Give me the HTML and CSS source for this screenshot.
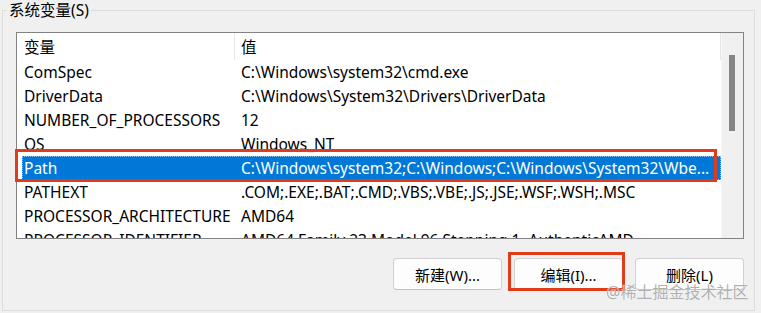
FILE: index.html
```html
<!DOCTYPE html>
<html lang="zh-CN">
<head>
    <meta charset="UTF-8">
    <title>系统变量</title>
    <link rel="stylesheet" href="styles.css">
</head>
<body>
    <fieldset class="group">
        <legend>系统变量(S)</legend>

        <div class="listbox">
            <div class="list">
                <div class="row head">
                    <span class="name">变量</span>
                    <span class="value">值</span>
                </div>
                <div class="row"><span class="name">ComSpec</span><span class="value">C:\Windows\system32\cmd.exe</span></div>
                <div class="row"><span class="name">DriverData</span><span class="value">C:\Windows\System32\Drivers\DriverData</span></div>
                <div class="row"><span class="name">NUMBER_OF_PROCESSORS</span><span class="value">12</span></div>
                <div class="row"><span class="name">OS</span><span class="value">Windows_NT</span></div>
                <div class="row selected"><span class="name">Path</span><span class="value">C:\Windows\system32;C:\Windows;C:\Windows\System32\Wbe...</span></div>
                <div class="row"><span class="name">PATHEXT</span><span class="value">.COM;.EXE;.BAT;.CMD;.VBS;.VBE;.JS;.JSE;.WSF;.WSH;.MSC</span></div>
                <div class="row"><span class="name">PROCESSOR_ARCHITECTURE</span><span class="value">AMD64</span></div>
                <div class="row"><span class="name">PROCESSOR_IDENTIFIER</span><span class="value">AMD64 Family 23 Model 96 Stepping 1, AuthenticAMD</span></div>
            </div>
            <div class="scrollbar"><div class="thumb"></div></div>
            <div class="mark mark-row"></div>
        </div>

        <div class="buttons">
            <button>新建(W)...</button>
            <div class="btn-wrap">
                <button>编辑(I)...</button>
                <div class="mark mark-btn"></div>
            </div>
            <button>删除(L)</button>
        </div>
    </fieldset>

    <div class="watermark">@稀土掘金技术社区</div>
</body>
</html>
```

FILE: styles.css
```css
:root {
    --bg: #f0f0f0;
    --line: #dcdcdc;
    --select: #0078d7;
    --mark: #e23b1b;
    --ui-font: "Noto Sans", "Noto Sans CJK SC", sans-serif;
}

body {
    margin: 0;
    height: 313px;
    overflow: hidden;
    background: var(--bg);
    font-family: var(--ui-font);
    font-size: 15.5px;
    color: #000;
    position: relative;
}

.group {
    margin: 0 6px 0 2px;
    padding: 12px 10px 20px 4px;
    border: 1px solid var(--line);
    min-width: 0;
}

.group legend {
    padding: 0 2px;
    line-height: 20px;
}

.listbox {
    position: relative;
    margin-left: 9px;
    height: 205px;
    border: 1px solid #828282;
    background: #fff;
    display: flex;
}

.list {
    flex: 1;
    overflow: hidden;
}

.row {
    display: flex;
    height: 24px;
    line-height: 24px;
    margin-left: 5px;
    white-space: nowrap;
}

.row .name {
    width: 211px;
    padding-left: 2px;
    flex-shrink: 0;
}

.row .value {
    padding-left: 6px;
    overflow: hidden;
}

.row.head {
    height: 27px;
    line-height: 28px;
}

.row.head .name {
    border-right: 1px solid #e5e5e5;
    width: 210px;
}

.row.head .value {
    flex: 1;
    border-right: 1px solid #e5e5e5;
}

.row.selected {
    background: var(--select);
    color: #fff;
    outline: 1px dotted #8cc4ee;
    outline-offset: -1px;
}

.scrollbar {
    width: 21px;
    background: var(--bg);
    border-left: 1px solid #f7f7f7;
}

.thumb {
    width: 6px;
    height: 76px;
    margin: 22px 0 0 7px;
    background: #858585;
}

.mark {
    position: absolute;
    border: 3px solid var(--mark);
    box-sizing: border-box;
    pointer-events: none;
}

.mark-row {
    left: -2px;
    top: 116px;
    width: 702px;
    height: 33px;
}

.buttons {
    display: flex;
    justify-content: flex-end;
    gap: 12px;
    margin-top: 19px;
}

.btn-wrap {
    position: relative;
    display: flex;
}

button {
    width: 109px;
    height: 32px;
    font-family: var(--ui-font);
    font-size: 15px;
    color: #000;
    background: #fdfdfd;
    border: 1px solid #d0d0d0;
    border-bottom-color: #c2c2c2;
    border-radius: 4px;
    padding: 0;
}

.mark-btn {
    left: -6px;
    top: -6px;
    width: 117px;
    height: 39px;
}

.watermark {
    position: absolute;
    left: 606px;
    top: 281px;
    font-size: 16px;
    line-height: 22px;
    color: rgba(150, 150, 150, 0.75);
    text-shadow: 0 0 1px #fff;
    pointer-events: none;
}
```
